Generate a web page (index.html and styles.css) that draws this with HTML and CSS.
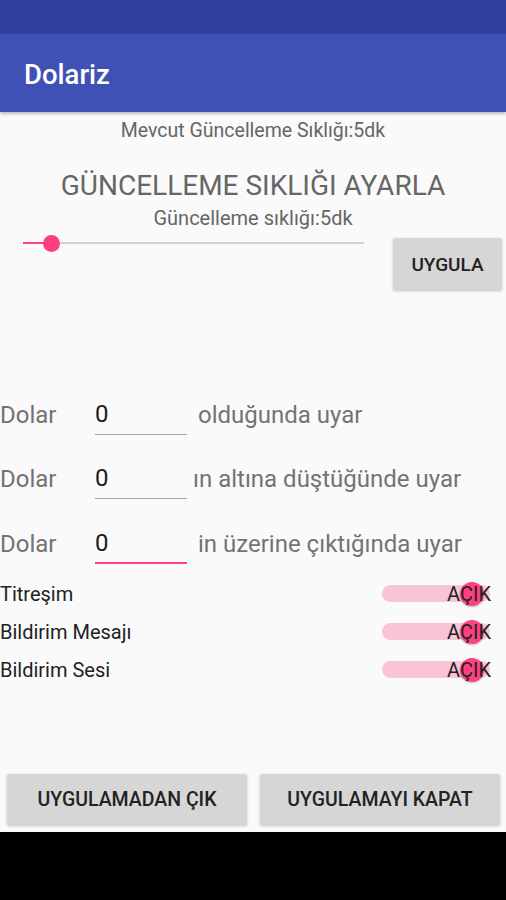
FILE: index.html
```html
<!DOCTYPE html>
<html lang="tr">
<head>
<meta charset="utf-8">
<title>Dolariz</title>
<link rel="stylesheet" href="styles.css">
</head>
<body>
<div class="screen">
  <div class="status"></div>
  <header class="appbar"><span class="title">Dolariz</span></header>
  <main class="content">
    <div class="current">Mevcut Güncelleme Sıklığı:5dk</div>
    <div class="heading">GÜNCELLEME SIKLIĞI AYARLA</div>
    <div class="sub">Güncelleme sıklığı:5dk</div>
    <div class="slider-row">
      <div class="slider">
        <div class="track"></div>
        <div class="track-active"></div>
        <div class="thumb"></div>
      </div>
      <button class="btn btn-apply">UYGULA</button>
    </div>

    <div class="alert-row row1">
      <span class="label">Dolar</span>
      <div class="field">0</div>
      <span class="desc d1">olduğunda uyar</span>
    </div>
    <div class="alert-row row2">
      <span class="label">Dolar</span>
      <div class="field">0</div>
      <span class="desc d2">ın altına düştüğünde uyar</span>
    </div>
    <div class="alert-row row3">
      <span class="label">Dolar</span>
      <div class="field focused">0</div>
      <span class="desc d1">in üzerine çıktığında uyar</span>
    </div>

    <div class="switches">
      <div class="switch-row">
        <span class="sw-label">Titreşim</span>
        <div class="switch"><div class="sw-track"></div><div class="sw-thumb"></div><span class="sw-text">AÇIK</span></div>
      </div>
      <div class="switch-row">
        <span class="sw-label">Bildirim Mesajı</span>
        <div class="switch"><div class="sw-track"></div><div class="sw-thumb"></div><span class="sw-text">AÇIK</span></div>
      </div>
      <div class="switch-row">
        <span class="sw-label">Bildirim Sesi</span>
        <div class="switch"><div class="sw-track"></div><div class="sw-thumb"></div><span class="sw-text">AÇIK</span></div>
      </div>
    </div>

    <div class="bottom-buttons">
      <button class="btn btn-wide">UYGULAMADAN ÇIK</button>
      <button class="btn btn-wide">UYGULAMAYI KAPAT</button>
    </div>
  </main>
  <div class="navbar"></div>
</div>
</body>
</html>
```
FILE: styles.css
```css
* { box-sizing: border-box; }
html, body { margin: 0; padding: 0; }
body {
  width: 506px;
  height: 900px;
  overflow: hidden;
  font-family: Roboto, "Noto Sans", "Liberation Sans", sans-serif;
  background: #000;
}
.screen {
  display: flex;
  flex-direction: column;
  width: 506px;
  height: 900px;
}
.status {
  height: 34px;
  background: #303f9f;
}
.appbar {
  height: 78px;
  background: #3f51b5;
  display: flex;
  align-items: center;
  padding-left: 24px;
  position: relative;
  z-index: 2;
  box-shadow: 0 2px 3px rgba(0,0,0,0.25);
}
.title {
  color: #fff;
  font-size: 27.5px;
  font-weight: 500;
  margin-top: 2px;
}
.content {
  height: 720px;
  background: #fafafa;
  display: flex;
  flex-direction: column;
}
.current {
  margin-top: 8px;
  text-align: center;
  font-size: 19.5px;
  line-height: 22px;
  color: #666;
}
.heading {
  margin-top: 28px;
  text-align: center;
  font-size: 28px;
  line-height: 32px;
  color: #666;
}
.sub {
  margin-top: 5px;
  text-align: center;
  font-size: 20px;
  line-height: 23px;
  color: #666;
}
.slider-row {
  margin-top: 8px;
  display: flex;
  align-items: flex-start;
  padding-right: 4px;
}
.slider {
  position: relative;
  margin-left: 23px;
  width: 341px;
  height: 10px;
}
.track {
  position: absolute;
  left: 0; right: 0; top: 4px;
  height: 2px;
  background: #d3d3d3;
}
.track-active {
  position: absolute;
  left: 0; width: 28px; top: 4px;
  height: 2px;
  background: #ff4081;
}
.thumb {
  position: absolute;
  left: 20px; top: -3px;
  width: 17px; height: 17px;
  border-radius: 50%;
  background: #ff3d7f;
}
.btn {
  border: none;
  background: #d6d6d6;
  border-radius: 2px;
  font-family: Roboto, "Noto Sans", "Liberation Sans", sans-serif;
  font-weight: 500;
  color: #222;
  box-shadow: 0 1px 3px rgba(0,0,0,0.22);
  padding: 0;
}
.btn-apply {
  margin-left: auto;
  width: 109px;
  height: 52px;
  font-size: 19px;
}
.alert-row {
  display: flex;
  align-items: center;
  height: 44px;
}
.row1 { margin-top: 103px; }
.row2 { margin-top: 20px; }
.row3 { margin-top: 21px; }
.label {
  width: 95px;
  font-size: 24px;
  color: #737373;
}
.field {
  width: 92px;
  height: 40px;
  border-bottom: 1px solid #a6a6a6;
  font-size: 24px;
  line-height: 38px;
  color: #1a1a1a;
}
.field.focused {
  border-bottom: 2px solid #ff4081;
}
.desc {
  font-size: 24px;
  color: #737373;
}
.d1 { margin-left: 11px; }
.d2 { margin-left: 6px; }
.switches {
  margin-top: 9px;
  display: flex;
  flex-direction: column;
}
.switch-row {
  display: flex;
  align-items: center;
  height: 38px;
}
.sw-label {
  font-size: 20px;
  color: #222;
}
.switch {
  position: relative;
  margin-left: auto;
  margin-right: 16px;
  width: 108px;
  height: 24px;
}
.sw-track {
  position: absolute;
  left: 0; right: 0; top: 3px;
  height: 17px;
  border-radius: 9px;
  background: #f9c4d7;
}
.sw-thumb {
  position: absolute;
  right: 6px; top: 0;
  width: 24px; height: 24px;
  border-radius: 50%;
  background: #ff4081;
  box-shadow: 0 1px 2px rgba(0,0,0,0.25);
}
.sw-text {
  position: absolute;
  right: -1px; top: 1px;
  font-size: 20px;
  line-height: 22px;
  color: #222;
}
.bottom-buttons {
  margin-top: auto;
  display: flex;
  gap: 13px;
  padding: 0 6px 7px 7px;
}
.btn-wide {
  flex: 1;
  height: 51px;
  font-size: 19.5px;
}
.navbar {
  flex: 1;
  background: #000;
}
```
